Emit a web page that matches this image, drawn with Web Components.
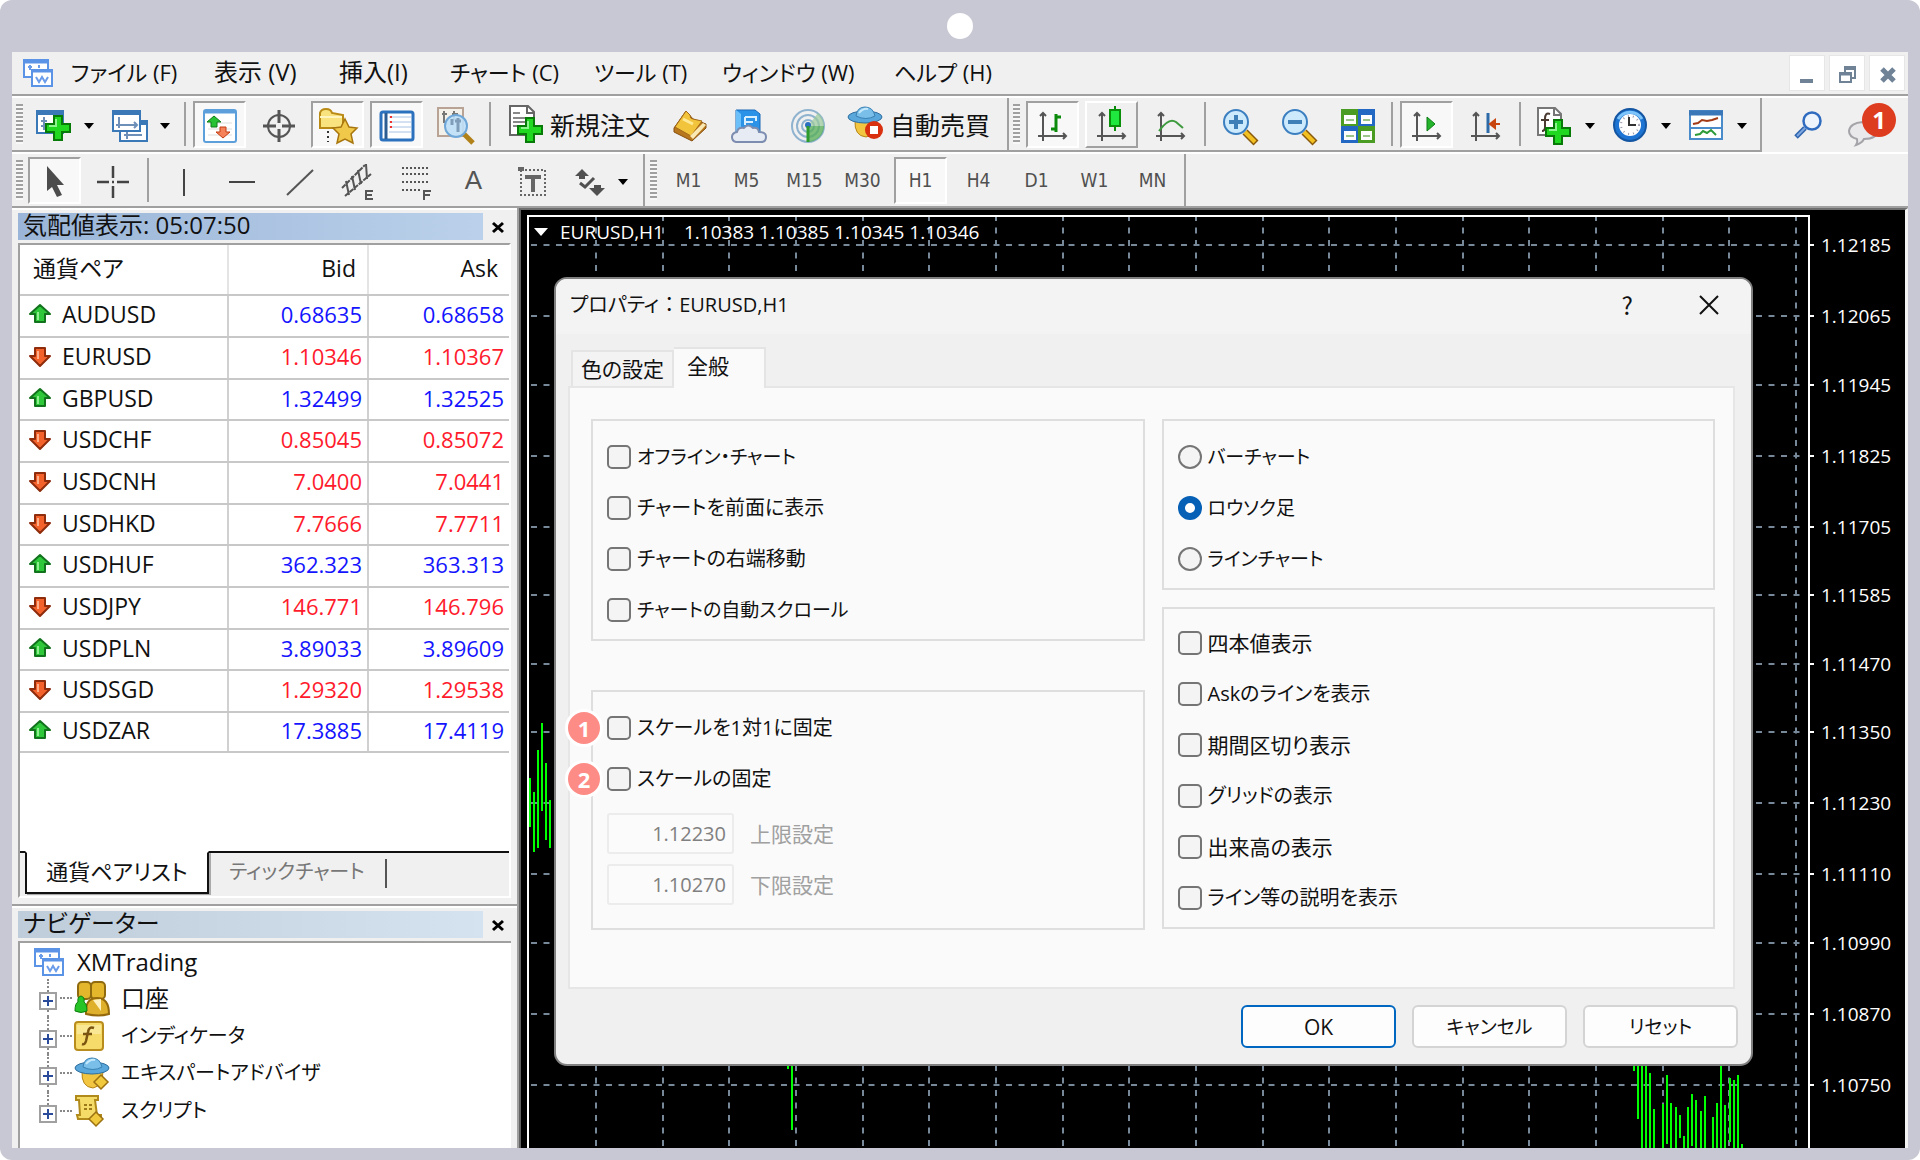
<!DOCTYPE html>
<html lang="ja">
<head>
<meta charset="utf-8">
<title>EURUSD,H1</title>
<style>
html,body{margin:0;background:#fff}
body{font-family:"Open Sans","Noto Sans CJK JP",sans-serif;font-size:24px;line-height:32px;font-feature-settings:"palt";color:#111}
</style>
</head>
<body>
<app-frame>
  <menu-bar slot="bars"></menu-bar>
  <tool-bars slot="bars"></tool-bars>
  <div slot="side" style="display:contents">
    <market-watch></market-watch>
    <nav-tree></nav-tree>
  </div>
  <price-chart slot="main">
    <props-dialog></props-dialog>
  </price-chart>
</app-frame>
<script>
const define=(name,html,setup)=>{
  const t=document.createElement('template');t.innerHTML=html;
  customElements.define(name,class extends HTMLElement{
    constructor(){super();this.attachShadow({mode:'open'})}
    connectedCallback(){
      if(this.ready)return;this.ready=true;
      this.shadowRoot.append(t.content.cloneNode(true));
      if(setup)setup(this,this.shadowRoot);
    }
  });
};

/* ---------- icons ---------- */
const plus=(x,y)=>`<path d="M${x-4} ${y-12}h8v8h8v8h-8v8h-8v-8h-8v-8h8z" fill="#1fd81f" stroke="#087a08" stroke-width="2"/><path d="M${x-2} ${y-9}v7h-7" fill="none" stroke="#8df58d" stroke-width="2"/>`;
const axes='<g stroke="#555" stroke-width="2" fill="none"><path d="M6 4v28M1 27h28"/><path d="M3 7l3-3 3 3M26 24l3 3-3 3"/></g>';
const winIcon=(x,y,w,h)=>`<rect x="${x+1}" y="${y+1}" width="${w-2}" height="${h-2}" fill="#fff" stroke="#3a78b8" stroke-width="2"/><rect x="${x}" y="${y}" width="${w}" height="5" rx="1" fill="#3a78b8"/>`;
const up='<path d="M12 3l10 9h-5v8H7v-8H2z" fill="#2fc83b" stroke="#11731c" stroke-width="2" stroke-linejoin="round"/><path d="M10 18v-8" stroke="#8ef08e" stroke-width="2"/>';
const down='<path d="M12 22L2 12h5V4h10v8h5z" fill="#f4622b" stroke="#8e2c0c" stroke-width="2" stroke-linejoin="round"/><path d="M10 7v8" stroke="#ffb08a" stroke-width="2"/>';
const hat=`<path d="M8 14q-1 16 11 17q10-2 10-17z" fill="#f3c642" stroke="#b58416" stroke-width="1"/><ellipse cx="18" cy="11" rx="17" ry="6" fill="#5aa7dc" stroke="#2d6e9f" stroke-width="1"/><path d="M9 10q1-9 9-9t10 9q-9 5-19 0z" fill="#79bfea" stroke="#3a80b2" stroke-width="1"/><path d="M12 7q4-5 9-4" stroke="#c5e8fb" stroke-width="2" fill="none"/>`;
const lens='<path d="M22 23l11 11" stroke="#8a5a0c" stroke-width="7"/><path d="M22 23l10 10" stroke="#f2c021" stroke-width="4"/><circle cx="13" cy="13" r="12" fill="#cdeafc" stroke="#3b7fc0" stroke-width="2"/>';
const I={
 logo:[32,32,'<g fill="#fff" stroke="#5b93e6" stroke-width="2"><path d="M2 3h24v17H2z"/><path d="M2 5h24" stroke-width="3"/><path d="M10 13h20v16H10z"/><path d="M10 14h20" stroke-width="3"/></g><path d="M6 10h4M8 8v5M17 8v3M14 20l3 5 3-5 3 5 3-5" stroke="#6a9cea" stroke-width="2" fill="none"/>'],
 newchart:[36,36,winIcon(0,2,28,24)+'<path d="M8 9v13M5 13h6M5 18h20" stroke="#6d8fb8" stroke-width="2"/>'+plus(22,20)],
 profiles:[36,36,winIcon(7,12,29,22)+'<path d="M12 27h18M15 24v7" stroke="#6d8fb8" stroke-width="2"/>'+winIcon(0,2,29,22)+'<path d="M4 17h20M7 9v11M22 14l3 3-3 3" stroke="#6d8fb8" stroke-width="2" fill="none"/>'],
 market:[34,34,'<rect x="1" y="1" width="32" height="32" rx="2" fill="#fff" stroke="#5d9fdb" stroke-width="2"/><path d="M1 3h32" stroke="#5d9fdb" stroke-width="3"/><path d="M5 14h24M5 20h24M5 26h24" stroke="#ddd" stroke-width="1"/><path d="M11 7l7 6h-4v5H8v-5H4z" fill="#27c233" stroke="#0f7a18"/><path d="M20 29l-7-6h4v-5h6v5h4z" fill="#f6825a" stroke="#c33c12"/>'],
 target:[32,32,'<g fill="none" stroke="#555"><circle cx="16" cy="16" r="11" stroke-width="2"/><path d="M16 0v13M16 19v13M0 16h13M19 16h13" stroke-width="3"/></g>'],
 folder:[38,36,'<path d="M1 5q1-4 6-4t6 4l11 2v13H1z" fill="#f9e37e" stroke="#b98a14" stroke-width="2"/><path d="M1 9h22" stroke="#fff5bf" stroke-width="2"/><path d="M9 23v11" stroke="#333" stroke-width="2" stroke-dasharray="2 3"/><path d="M26 11l4 8 8 1-6 6 2 9-8-4-8 4 2-9-6-6 8-1z" fill="#f0c94a" stroke="#a8760e" stroke-width="1.5"/>'],
 terminal:[34,30,'<rect x="1" y="1" width="32" height="28" rx="2" fill="#fff" stroke="#2b71bd" stroke-width="3"/><path d="M6 2v26" stroke="#2c5d92" stroke-width="3"/><path d="M9 6h22M9 11h22M9 16h22M9 21h22" stroke="#a9c2e6" stroke-width="1"/><path d="M11 5v13" stroke="#e33" stroke-width="2" stroke-dasharray="2 3"/>'],
 tester:[38,38,'<rect x="1" y="1" width="25" height="28" fill="#f4f0ea" stroke="#b8a394" stroke-width="2"/><path d="M7 4v12M17 4v10M5 7h5M15 7h6" stroke="#777" stroke-width="2"/><path d="M27 27l9 9" stroke="#b1811a" stroke-width="5"/><circle cx="19" cy="19" r="11" fill="#bfe0f8" fill-opacity=".9" stroke="#6fa8d8" stroke-width="2"/><path d="M15 12v6M21 11v14M18 14h6" stroke="#7f9db9" stroke-width="3" fill="none"/>'],
 order:[34,38,'<path d="M1 1h18l6 6v23H1z" fill="#fff" stroke="#666" stroke-width="2"/><path d="M18 1v7h7" fill="none" stroke="#666" stroke-width="2"/><path d="M4 8h7M4 13h16M4 17h16M4 21h10" stroke="#888" stroke-width="2"/>'+plus(21,25)],
 book:[34,32,'<path d="M13 1L1 18v4l18 9 14-13v-4L20 9z" fill="#b8771c" stroke="#86500e" stroke-width="1"/><path d="M13 1L2 17l16 9 11-15-9-2q-3 0-3-4z" fill="#f2c43c" stroke="#a3691a" stroke-width="1"/><path d="M17 26l13-13 3 2-13 14z" fill="#fbe9b4"/><path d="M10 9l10 5" stroke="#ffe994" stroke-width="3"/>'],
 cloud:[36,34,'<path d="M5 1h19l5 4v18H5z" fill="#2a93e8" stroke="#1d69b8"/><path d="M5 1l5 4v18H5z" fill="#6cc0fa"/><path d="M14 8h11v4M14 8v8M14 13h8" stroke="#d8efff" stroke-width="2" fill="none"/><path d="M5 33q-4-1-4-5t5-5q1-5 7-4 4-5 9 0 5-1 6 4 7 0 7 5t-5 5z" fill="#e7ebf4" stroke="#7d8db0" stroke-width="2"/>'],
 signal:[36,34,'<g fill="none" stroke="#8fb3cf" stroke-width="2"><circle cx="18" cy="17" r="16"/><circle cx="18" cy="17" r="11"/><circle cx="18" cy="17" r="6"/></g><path d="M18 17h16a16 16 0 0 1-16 16z" fill="#55ad55" fill-opacity=".75"/><path d="M18 17l10-13q6 5 6 13z" fill="#9acb9a" fill-opacity=".7"/><circle cx="18" cy="16" r="3" fill="#2b6fc0"/><path d="M18 17v16" stroke="#2c9a2c" stroke-width="3"/>'],
 auto:[36,36,hat+'<circle cx="27" cy="24" r="9" fill="#d9300f"/><rect x="23" y="20" width="8" height="8" fill="#fff"/>'],
 bars:[32,34,axes+'<path d="M19 5v18M19 8h5M14 20h5" stroke="#0b8a0b" stroke-width="3"/>'],
 candle:[32,34,axes+'<path d="M19 -3v25" stroke="#0a8a0a" stroke-width="2"/><rect x="14" y="1" width="10" height="16" fill="#1fe83f" stroke="#0a8f0a" stroke-width="2"/>'],
 line:[32,34,axes+'<path d="M4 22q10-14 17-9l7 6" stroke="#3d9a3d" stroke-width="2" fill="none"/>'],
 zoomin:[34,34,lens+'<path d="M13 6v14M6 13h14" stroke="#3f7fb8" stroke-width="4"/>'],
 zoomout:[34,34,lens+'<path d="M6 13h14" stroke="#3f7fb8" stroke-width="4"/>'],
 tiles:[34,34,'<path d="M0 0h17v17H0zM17 17h17v17H17z" fill="#4a9c22"/><path d="M17 0h17v17H17zM0 17h17v17H0z" fill="#2369c4"/><g fill="#fff"><path d="M3 6h12v9H3zM20 6h11v9H20zM3 22h12v9H3zM20 22h11v9H20z"/></g><path d="M5 11h8M5 27h8M22 11h7M22 27h7" stroke="#9cc58a" stroke-width="2"/>'],
 scroll:[32,34,axes+'<path d="M16 8v14l8-7z" fill="#25b52d" stroke="#0c7d14" stroke-width="1"/>'],
 shift:[32,34,axes+'<path d="M18 4v20" stroke="#2c6ba8" stroke-width="3"/><path d="M30 15h-6M25 11l-5 4 5 4z" stroke="#c94510" stroke-width="2" fill="#c94510"/>'],
 indic:[36,38,'<path d="M1 1h17l6 6v21H1z" fill="#fff" stroke="#777" stroke-width="2"/><path d="M17 1v7h7" fill="none" stroke="#777" stroke-width="2"/><path d="M13 7q-5-2-5 5v8q0 4-3 4M4 13h8" stroke="#4a3a32" stroke-width="2" fill="none"/>'+plus(21,25)],
 clock:[36,36,'<circle cx="17" cy="17" r="16" fill="#1d74d2" stroke="#1456a2" stroke-width="2"/><path d="M5 11a14 14 0 0 1 24 0" stroke="#7cc4fa" stroke-width="3" fill="none"/><circle cx="17" cy="17" r="11" fill="#fff"/><circle cx="17" cy="17" r="9" fill="none" stroke="#99a" stroke-width="2" stroke-dasharray="1 4"/><path d="M16 9v8h7" stroke="#333" stroke-width="2" fill="none"/>'],
 templ:[36,32,'<rect x="1" y="1" width="32" height="28" fill="#fff" stroke="#4a8bcb" stroke-width="2"/><path d="M0 3h34" stroke="#3a77b8" stroke-width="5"/><path d="M1 18h32" stroke="#4a8bcb" stroke-width="2"/><path d="M4 14l5-1 4-3 5 1 5-1 6-2" stroke="#a23a16" stroke-width="2" fill="none"/><path d="M6 25l5-1 3-3 4 2 4-3 5 5" stroke="#2e9b3a" stroke-width="2" fill="none"/>'],
 search:[30,28,'<path d="M11 17L2 26" stroke="#2e63ae" stroke-width="5"/><path d="M11 17L3 25" stroke="#7fa8e0" stroke-width="2"/><circle cx="18" cy="10" r="8.5" fill="#eef4fc" stroke="#2f6cc0" stroke-width="2.5"/>'],
 balloon:[32,28,'<path d="M8 26q2-3 1-6-8-2-8-8 1-8 14-9 14 1 14 9t-13 8q-2 4-8 6z" fill="#e9e9ec" stroke="#a3a3a8" stroke-width="2"/>'],
 cursor:[20,34,'<path d="M2 1v25l5-4 5 10 5-2-5-10h7z" fill="#4c4c4c"/>'],
 cross:[32,32,'<path d="M16 0v12M16 20v12M0 16h12M20 16h12M15 16h2" stroke="#444" stroke-width="2.5"/>'],
 vline:[10,30,'<path d="M5 2v27" stroke="#444" stroke-width="2"/>'],
 hline:[28,10,'<path d="M1 5h26" stroke="#444" stroke-width="2"/>'],
 trend:[30,30,'<path d="M2 28L28 3" stroke="#555" stroke-width="2"/>'],
 chan:[34,36,'<g stroke="#555" stroke-width="2"><path d="M1 24L24 1M4 32L30 10" stroke-dasharray="5 1"/><path d="M5 17l3 14M11 12l3 14M17 6l3 14M25 0l1 15"/><path d="M25 26v10M24 27h8M24 31h7M24 35h8"/></g>'],
 fibo:[32,36,'<g stroke="#555" stroke-width="2"><path d="M2 4h28M2 10h28M2 18h28M2 26h20" stroke-dasharray="2 2"/><path d="M24 26v10M23 27h8M24 31h6"/></g>'],
 label:[28,30,'<rect x="3" y="3" width="24" height="25" fill="none" stroke="#666" stroke-width="2" stroke-dasharray="2 2"/><path d="M0 0h6v4H0z" fill="#666"/><path d="M7 10h16M15 10v15" stroke="#666" stroke-width="4"/>'],
 arrows:[32,28,'<path d="M1 8l7-7 7 7h-4v3H5V8zM15 20l8 8 8-8h-4v-3h-7v3z" fill="#505050"/><path d="M6 15l5 4 9-9" stroke="#505050" stroke-width="3" fill="none"/>'],
 caret:[12,8,'<path d="M1 1h10L6 7z" fill="#000"/>'],
 x:[14,14,'<path d="M2 3l10 9M12 3L2 12" stroke="#000" stroke-width="3"/>'],
 up:[24,24,up],down:[24,24,down],
 people:[36,36,'<rect x="4" y="2" width="13" height="17" rx="4" fill="#e3b62b" stroke="#8f6a0f" stroke-width="2"/><rect x="17" y="2" width="14" height="17" rx="4" fill="#e3b62b" stroke="#8f6a0f" stroke-width="2"/><path d="M12 34q-1-16 11-16t12 16q-10 3-23 0z" fill="#dfb02c" stroke="#94690c" stroke-width="2"/><path d="M19 20l8 11 0-12" fill="#fff1c2"/><path d="M1 31q0-8 3-9-1-5 3-6 4 1 3 6 3 2 3 9-6 3-12 0z" fill="#26c426" stroke="#0d7e0d"/>'],
 func:[30,30,'<rect x="1" y="1" width="28" height="28" rx="3" fill="#f6db6a" stroke="#b98d1d" stroke-width="2"/><path d="M3 4h24v9H3z" fill="#fbeeb0" opacity=".6"/><path d="M20 7q-5-2-6 4l-2 9q-1 4-4 3M9 13h9" stroke="#7a5410" stroke-width="2.5" fill="none"/>'],
 expert:[36,32,hat+'<path d="M27 18l7 7-7 7-7-7z" fill="#f0c93c" stroke="#9c7112" stroke-width="1.5"/>'],
 script:[32,32,'<path d="M2 1h22v4h-3l2 15h4v4H4l-1-4h3L5 5H2z" fill="#f5dc69" stroke="#b18a1c" stroke-width="2"/><path d="M10 10h3M15 10h3M10 14h3M15 14h3" stroke="#9d7a18" stroke-width="2"/><path d="M22 17l7 7-7 7-7-7z" fill="#f0c93c" stroke="#9c7112" stroke-width="1.5"/>'],
 min:[36,36,'<path d="M10 25h13" stroke="#6f8296" stroke-width="4"/>'],
 restore:[36,36,'<path d="M15 16v-4h10v10h-3" fill="none" stroke="#6f8296" stroke-width="2"/><path d="M14 12h12" stroke="#6f8296" stroke-width="4"/><path d="M10 17h11v9H10z" fill="#fff" stroke="#6f8296" stroke-width="2"/><path d="M9 18h13" stroke="#6f8296" stroke-width="3"/>'],
 close:[36,36,'<path d="M12 13l12 12M24 13L12 25" stroke="#6f8296" stroke-width="5"/>'],
 dlgclose:[20,20,'<path d="M1 1l18 18M19 1L1 19" stroke="#111" stroke-width="2"/>']
};
const icon=n=>{const[w,h,b]=I[n];return `<svg width="${w}" height="${h}" viewBox="0 0 ${w} ${h}" overflow="visible" aria-hidden="true">${b}</svg>`};
define('ui-icon','<style>:host{display:inline-flex;flex:none}svg{display:block}</style>',(el,r)=>{
  r.append(document.createRange().createContextualFragment(icon(el.getAttribute('name'))));
});

/* ---------- shell ---------- */
define('app-frame',`<style>
:host{display:flex;flex-direction:column;min-height:100vh;box-sizing:border-box;padding:0 12px 12px;background:#c8c8d4;border-radius:12px}
.top{height:52px;display:flex;align-items:center;justify-content:center}
.top i{width:26px;height:26px;border-radius:50%;background:#fff}
.bars{display:block;background:#f0f0f0}
.body{flex:1;display:flex;background:#f0f0f0;border-top:2px solid #a0a0a0;min-height:0}
.side{width:505px;flex:none;display:flex;flex-direction:column;border-right:2px solid #a0a0a0}
.main{flex:1;display:flex;min-width:0}
</style><div class="top"><i></i></div><div class="bars"><slot name="bars"></slot></div>
<div class="body"><div class="side"><slot name="side"></slot></div><div class="main"><slot name="main"></slot></div></div>`);

define('menu-bar',`<style>
:host{display:flex;align-items:center;height:42px;padding:0 3px 0 8px;border-bottom:2px solid #a0a0a0}
.logo{width:51px;padding-left:2px;box-sizing:border-box}
nav{flex:1;display:grid;grid-template-columns:143px 125px 111px 144px 128px 172px auto;justify-content:start;align-items:center;padding-bottom:3px}
a{color:#111;text-decoration:none;white-space:nowrap}
.k{font-size:22px}
.win{display:flex;gap:4px}
button{width:36px;height:36px;padding:0;border:1px solid #e6e6e6;background:#fff}
</style><ui-icon class="logo" name="logo"></ui-icon>
<nav><a class="k" href="#">ファイル (F)</a><a href="#">表示 (V)</a><a href="#">挿入(I)</a><a class="k" href="#">チャート (C)</a><a class="k" href="#">ツール (T)</a><a class="k" href="#">ウィンドウ (W)</a><a class="k" href="#">ヘルプ (H)</a></nav>
<div class="win"><button aria-label="最小化"><ui-icon name="min"></ui-icon></button><button aria-label="元に戻す"><ui-icon name="restore"></ui-icon></button><button aria-label="閉じる"><ui-icon name="close"></ui-icon></button></div>`);

define('tool-button',`<style>
:host{display:flex;flex:none}
button{display:flex;align-items:center;justify-content:center;gap:11px;width:53px;height:47px;box-sizing:border-box;padding:0;border:2px solid transparent;background:none;color:#505050;font:19px/24px "DejaVu Sans Condensed","DejaVu Sans",sans-serif}
:host([drop]) button{width:76px}
:host([icon]) button{padding-top:3px}
:host([pressed]) button{background:#f8f8f8;border-color:#a0a0a0 #fff #fff #a0a0a0}
:host([raised]) button{border-color:#fff #a0a0a0 #a0a0a0 #fff}
:host([wide]) button{width:auto;gap:7px;padding:0 5px;font:25px/32px "Noto Sans CJK JP",sans-serif;color:#111;white-space:nowrap}
</style><button><slot></slot></button>`,(el,r)=>{
  const b=r.querySelector('button'),n=el.getAttribute('icon');
  if(n){b.insertAdjacentHTML('afterbegin',`<ui-icon name="${n}"></ui-icon>`);b.title=n}
  if(el.hasAttribute('drop'))b.insertAdjacentHTML('beforeend','<ui-icon name="caret"></ui-icon>');
});

define('tool-bars',`<style>
:host{display:block;border-top:2px solid #fff}
.row{display:flex;align-items:center;height:52px}
.row.a{height:54px}
.set{display:flex;align-items:center;gap:5px;height:52px;box-sizing:border-box;border-right:2px solid #a0a0a0;padding:0 4px}
.first{border-bottom:2px solid #a0a0a0;gap:6px;height:54px}
.one{padding-right:10px}
.tf{padding:0 5px}
.row.b{border-top:2px solid #fff}
.fill{flex:1}
.grip{width:7px;height:40px;background:repeating-linear-gradient(#a0a0a0 0 2px,#f8f8f8 2px 4px)}
.sep{width:2px;height:44px;background:#a0a0a0;margin:0 1px}
.one .sep+tool-button[wide]{margin-left:4px}
.b .sep{margin:0 3px}
.drops{display:flex}
.one .drops{margin:0 -2px}
.end{display:flex;align-items:center;gap:24px;padding-right:12px}
.note{position:relative;width:48px;height:44px;display:flex;align-items:flex-end}
.note b{position:absolute;right:0;top:0;width:34px;height:34px;border-radius:50%;background:#de3c1e;color:#fff;font:bold 24px/34px "Open Sans",sans-serif;text-align:center}
.big{font:26px/26px "Liberation Sans",sans-serif;color:#555}
</style>
<div class="row a"><div class="set first one">
<span class="grip"></span><span class="drops"><tool-button icon="newchart" drop></tool-button><tool-button icon="profiles" drop></tool-button></span><span class="sep"></span>
<tool-button icon="market" pressed></tool-button><tool-button icon="target"></tool-button><tool-button icon="folder" pressed></tool-button><tool-button icon="terminal" pressed></tool-button><tool-button icon="tester"></tool-button><span class="sep"></span>
<tool-button icon="order" wide>新規注文</tool-button><tool-button icon="book"></tool-button><tool-button icon="cloud"></tool-button><tool-button icon="signal"></tool-button><tool-button icon="auto" wide>自動売買</tool-button></div>
<div class="set first"><span class="grip"></span>
<tool-button icon="bars" pressed></tool-button><tool-button icon="candle" raised></tool-button><tool-button icon="line"></tool-button><span class="sep"></span>
<tool-button icon="zoomin"></tool-button><tool-button icon="zoomout"></tool-button><tool-button icon="tiles"></tool-button><span class="sep"></span>
<tool-button icon="scroll" pressed></tool-button><tool-button icon="shift"></tool-button><span class="sep"></span>
<span class="drops"><tool-button icon="indic" drop></tool-button><tool-button icon="clock" drop></tool-button><tool-button icon="templ" drop></tool-button></span></div>
<span class="fill"></span><div class="end"><ui-icon name="search"></ui-icon><div class="note"><ui-icon name="balloon"></ui-icon><b>1</b></div></div></div>
<div class="row b"><div class="set">
<span class="grip"></span><tool-button icon="cursor" pressed></tool-button><tool-button icon="cross"></tool-button><span class="sep"></span>
<tool-button icon="vline"></tool-button><tool-button icon="hline"></tool-button><tool-button icon="trend"></tool-button><tool-button icon="chan"></tool-button><tool-button icon="fibo"></tool-button><tool-button><span class="big">A</span></tool-button><tool-button icon="label"></tool-button><tool-button icon="arrows" drop></tool-button></div>
<div class="set tf"><span class="grip"></span><tool-button>M1</tool-button><tool-button>M5</tool-button><tool-button>M15</tool-button><tool-button>M30</tool-button><tool-button pressed>H1</tool-button><tool-button>H4</tool-button><tool-button>D1</tool-button><tool-button>W1</tool-button><tool-button>MN</tool-button></div></div>`);

/* ---------- left panels ---------- */
define('panel-title',`<style>
:host{display:flex;align-items:center;height:27px;margin:3px -2px 3px 6px}
h2{flex:1;margin:0;padding-left:5px;font:inherit;line-height:23px;height:27px;overflow:hidden;background:linear-gradient(90deg,var(--from),var(--to))}
button{width:30px;height:27px;border:0;padding:0;background:none;display:flex;align-items:center;justify-content:center}
</style><h2><slot></slot></h2><button aria-label="閉じる"><ui-icon name="x"></ui-icon></button>`);

const quotes=[['AUDUSD','0.68635','0.68658',1],['EURUSD','1.10346','1.10367',0],['GBPUSD','1.32499','1.32525',1],['USDCHF','0.85045','0.85072',0],['USDCNH','7.0400','7.0441',0],['USDHKD','7.7666','7.7711',0],['USDHUF','362.323','363.313',1],['USDJPY','146.771','146.796',0],['USDPLN','3.89033','3.89609',1],['USDSGD','1.29320','1.29538',0],['USDZAR','17.3885','17.4119',1]];
define('market-watch',`<style>
:host{display:flex;flex-direction:column;border-bottom:2px solid #a0a0a0;height:694px;border-top:2px solid #fff;padding-right:6px;--from:#9ab5d7;--to:#bbd1eb}
.box{flex:1;display:flex;flex-direction:column;margin:0 0 6px 6px;border:2px solid #a0a0a0;border-right-color:#fff;border-bottom-color:#fff;background:#fff}
table{border-collapse:collapse;table-layout:fixed;width:100%}
th,td{box-sizing:border-box;padding:0 5px 4px 0;height:42px;text-align:right;border-bottom:2px solid #c8c8c8;font-size:22px;line-height:28px;font-weight:400;font-feature-settings:normal}
tr:nth-child(3n) td{height:41px}
tr:last-child td{height:40px}
td+td,th+th{border-left:2px solid #d0d0d0}
th{height:50px;font-size:23px;padding:0 11px 3px 0;font-feature-settings:"palt"}
th+th{border-color:#e4e4e4}
th,th+th{border-bottom-color:#c8c8c8}
th:first-child{text-align:left;padding:0 0 3px 13px}
.s{width:208px}.b{width:140px}
td:first-child{text-align:left;font-size:23px;padding-left:8px}
td div{display:flex;align-items:center;gap:10px}
.u{color:#1414ff}.d{color:#ff1a2c}
.tabs{display:flex;margin-top:auto;height:45px;background:#f0f0f0}
.tabs button{border:0;background:none;padding:0 0 4px;font:inherit;font-feature-settings:inherit;font-size:22px;height:43px;color:#777;border-top:2px solid #111;white-space:nowrap}
.tabs .on{width:184px;box-sizing:border-box;background:#fff;color:#111;border:2px solid #111;border-top-color:#fff;box-shadow:2px 1px 0 #aaa}
.tabs i{width:5px;height:2px;background:#111}
.tabs .off{padding:0 20px 4px;box-sizing:border-box;font-size:20px}
.rest{flex:1;border-top:2px solid #111}
.rest::before{content:"";display:block;width:2px;height:29px;margin-top:6px;background:#555}
</style><panel-title>気配値表示: 05:07:50</panel-title><div class="box"><table><thead><tr><th class="s">通貨ペア</th><th class="b">Bid</th><th>Ask</th></tr></thead><tbody></tbody></table>
<div class="tabs"><i></i><button class="on">通貨ペアリスト</button><button class="off">ティックチャート</button><span class="rest"></span></div></div>`,(el,r)=>{
  r.querySelector('tbody').innerHTML=quotes.map(([s,b,a,u])=>`<tr><td><div><ui-icon name="${u?'up':'down'}"></ui-icon>${s}</div></td><td class="${u?'u':'d'}">${b}</td><td class="${u?'u':'d'}">${a}</td></tr>`).join('');
});

define('nav-tree',`<style>
:host{display:flex;flex-direction:column;flex:1;border-top:2px solid #fff;padding-right:6px;--from:#bfccda;--to:#d5e2f0}
.box{flex:1;margin-left:6px;border:2px solid #a0a0a0;border-width:2px 0 0 2px;background:#fff;padding:1px 0 0 13px}
.root{display:flex;align-items:center;gap:12px;height:35px}
ul{list-style:none;margin:0;padding:0 0 0 6px}
li{display:flex;align-items:center;height:38px}
li:nth-child(2n){height:37px}
.k{font-size:20px}
.tg{width:18px;height:18px;box-sizing:border-box;padding:0;border:2px solid #a0a0a0;background:#fff;display:flex;align-items:center;justify-content:center}
.tg::before{content:"";width:10px;height:10px;background:linear-gradient(#2a4a9a,#2a4a9a) center/10px 2px no-repeat,linear-gradient(#2a4a9a,#2a4a9a) center/2px 10px no-repeat}
.dot{width:12px;border-top:2px dotted #888;margin:0 2px 0 3px}
.ic{width:47px;display:flex}
.v{display:flex;flex-direction:column;align-items:center;height:100%}
.v::before{content:"";height:13px;border-left:2px dotted #888}
.v::after{content:"";flex:1;border-left:2px dotted #888}
li:last-child .v::after{visibility:hidden}
</style><panel-title>ナビゲーター</panel-title><div class="box"><div class="root"><ui-icon name="logo"></ui-icon>XMTrading</div><ul></ul></div>`,(el,r)=>{
  r.querySelector('ul').innerHTML=[['people','口座',''],['func','インディケータ','k'],['expert','エキスパートアドバイザ','k'],['script','スクリプト','k']].map(([i,t,c])=>`<li><span class="v"><button class="tg" aria-label="${t}"></button></span><span class="dot"></span><span class="ic"><ui-icon name="${i}"></ui-icon></span><span class="${c}">${t}</span></li>`).join('');
});

/* ---------- chart ---------- */
define('price-chart',`<style>
:host{display:flex;flex:1;position:relative;background:#000;border:2px solid #6e6e6e;border-right:3px solid #f4f4f4;border-bottom:0;border-left-color:#606060;padding:5px 0 0 6px;min-width:0}
.plot{flex:1;border:2px solid #fff;border-bottom:0;position:relative;min-width:0}
.axis{width:95px;position:relative}
svg{position:absolute;inset:0;width:100%;height:100%}
.axis svg{overflow:visible}
text{font:19px "Open Sans",sans-serif;fill:#fff}
.head{position:relative;display:flex;align-items:center;gap:20px;height:24px;margin:3px 0 0 5px;color:#fff;font-size:19px;line-height:24px;white-space:nowrap;font-feature-settings:normal}
.head::before{content:"";border:7px solid transparent;border-top:8px solid #fff;border-bottom:0;margin-right:-8px}
</style><div class="plot"><svg class="g"></svg><div class="head"><span>EURUSD,H1</span><span>1.10383 1.10385 1.10345 1.10346</span></div></div><div class="axis"><svg class="a"></svg></div><slot></slot>`,(el,r)=>{
  const rows=[[28,'1.12185'],[99,'1.12065'],[168,'1.11945'],[239,'1.11825'],[310,'1.11705'],[378,'1.11585'],[447,'1.11470'],[515,'1.11350'],[586,'1.11230'],[657,'1.11110'],[726,'1.10990'],[797,'1.10870'],[868,'1.10750']];
  let g='<g stroke="#778899" stroke-width="2">';
  for(let k=0;k<19;k++){const x=Math.round(67+k*66.67);g+=`<line x1="${x}" y1="-2" x2="${x}" y2="100%" stroke-dasharray="6 6.5"/>`}
  rows.forEach(([y])=>g+=`<line x1="2" y1="${y}" x2="1272" y2="${y}" stroke-dasharray="6 6.5"/>`);
  g+='</g><g stroke="#00ff00" stroke-width="2">';
  [[530,778,827],[534,792,852],[538,750,848],[542,723,811],[546,763,840],[550,800,848],[788,1060,1069],[792,1060,1130],[1634,1060,1071],[1638,1060,1119],[1642,1060,1150],[1646,1060,1150],[1650,1073,1150],[1654,1109,1150],[1663,1104,1150],[1667,1075,1144],[1671,1103,1150],[1676,1107,1150],[1680,1115,1138],[1684,1136,1150],[1688,1107,1150],[1692,1094,1146],[1696,1100,1150],[1701,1111,1150],[1705,1096,1150],[1713,1117,1150],[1717,1103,1150],[1721,1060,1150],[1725,1105,1150],[1730,1078,1142],[1734,1080,1150],[1738,1075,1150],[1742,1144,1150]].forEach(([x,a,b])=>g+=`<line x1="${x-529}" y1="${a-217}" x2="${x-529}" y2="${b-217}"/>`);
  r.querySelector('.g').innerHTML=g+'</g>';
  r.querySelector('.a').innerHTML=rows.map(([y,t])=>`<line x1="0" x2="4" y1="${y+2}" y2="${y+2}" stroke="#fff" stroke-width="2"/><text x="11" y="${y+9}">${t}</text>`).join('');
});

/* ---------- dialog ---------- */
define('check-option',`<style>
:host{display:flex;height:24px}
label{display:flex;align-items:center;gap:6px;white-space:nowrap;font-size:20px;line-height:24px}
:host([kana]) label{font-size:19px}
:host([kanji]) label{font-size:21px}
input{appearance:none;margin:0;width:24px;height:24px;box-sizing:border-box;border:2px solid #757575;border-radius:5px;background:#f4f4f4}
input[type=radio]{border-radius:50%}
input[type=radio]:checked{border:7px solid #0560b6;background:#fff}
.badge{position:absolute;margin-left:-42px;width:32px;height:32px;border:3px solid #fff;border-radius:50%;background:#fe8c86;color:#fff;font:bold 22px/32px "Open Sans",sans-serif;text-align:center}
</style><label><input type="checkbox"><slot></slot></label>`,(el,r)=>{
  const i=r.querySelector('input');
  if(el.hasAttribute('radio')){i.type='radio';i.name='kind'}
  i.checked=el.hasAttribute('checked');
  if(el.hasAttribute('badge'))r.querySelector('label').insertAdjacentHTML('afterbegin',`<span class="badge">${el.getAttribute('badge')}</span>`);
});
define('option-group',`<style>:host{display:block}fieldset{margin:0;border:2px solid #dedede;padding:24px 14px 17px;display:flex;flex-direction:column;gap:27px;min-width:0}:host([tall]) fieldset{padding-top:22px}</style><fieldset><slot></slot></fieldset>`);
define('limit-field',`<style>
:host{display:block}
label{display:flex;align-items:center;gap:16px;color:#a0a0a0;font-size:21px;line-height:24px}
input{width:127px;height:41px;box-sizing:border-box;border:2px solid #ececec;border-radius:3px;background:#fbfbfb;color:#808080;font:20px/24px "Open Sans",sans-serif;text-align:right;padding:0 6px}
</style><label><input disabled><slot></slot></label>`,(el,r)=>{r.querySelector('input').value=el.getAttribute('value')});
define('props-dialog',`<style>
:host{position:absolute;left:33px;top:67px;width:1199px;box-sizing:border-box;border:2px solid #808080;border-radius:13px;background:#f0f0f0;overflow:hidden;font-size:21px;line-height:28px;padding-bottom:16px}
header{display:flex;align-items:center;height:55px;box-sizing:border-box;background:#f3f3f3;padding:0 32px 3px 14px}
h1{flex:1;margin:0;font:inherit;font-size:20px}
h1 span{font-feature-settings:normal}
header button{border:0;background:none;padding:0;font:24px/28px "Noto Sans CJK JP",sans-serif;color:#111;margin-left:66px;display:flex}
.tabs{display:flex;align-items:flex-end;padding:13px 0 0 15px}
.tabs button{font:inherit;font-feature-settings:inherit;box-sizing:border-box;height:36px;width:103px;padding:0;border:2px solid #e4e4e4;border-bottom:0;background:#f3f3f3;color:#111}
.tabs .on{height:41px;width:92px;background:#fafafa;margin-bottom:-2px;padding:0 0 5px 13px;text-align:left;border-left:0;position:relative}
.page{display:grid;grid-template-columns:1fr 1fr;gap:17px;margin:0 16px 0 12px;border:2px solid #e6e6e6;background:#fafafa;padding:31px 18px 57px 21px}
.col{display:flex;flex-direction:column}
.l{gap:49px}.r{gap:17px}
.fields{display:flex;flex-direction:column;gap:10px;margin-top:-5px;padding-bottom:6px}
footer{display:flex;justify-content:flex-end;gap:16px;padding:16px 13px 0 0}
footer button{width:155px;height:43px;box-sizing:border-box;border:2px solid #d4d4d4;border-radius:6px;background:#fdfdfd;font:inherit;font-feature-settings:inherit;color:#111;padding:0}
footer .k{font-size:19px}
footer .ok{border-color:#0067c0}
</style>
<header><h1>プロパティ<span>：</span>EURUSD,H1</h1><button aria-label="ヘルプ">?</button><button aria-label="閉じる"><ui-icon name="dlgclose"></ui-icon></button></header>
<div class="tabs"><button>色の設定</button><button class="on">全般</button></div>
<div class="page"><div class="col l">
<option-group><check-option kana>オフライン・チャート</check-option><check-option>チャートを前面に表示</check-option><check-option>チャートの右端移動</check-option><check-option kana>チャートの自動スクロール</check-option></option-group>
<option-group><check-option badge="1">スケールを1対1に固定</check-option><check-option badge="2">スケールの固定</check-option><div class="fields"><limit-field value="1.12230">上限設定</limit-field><limit-field value="1.10270">下限設定</limit-field></div></option-group>
</div><div class="col r">
<option-group><check-option radio kana>バーチャート</check-option><check-option radio kana checked>ロウソク足</check-option><check-option radio kana>ラインチャート</check-option></option-group>
<option-group tall><check-option kanji>四本値表示</check-option><check-option>Askのラインを表示</check-option><check-option kanji>期間区切り表示</check-option><check-option>グリッドの表示</check-option><check-option kanji>出来高の表示</check-option><check-option>ライン等の説明を表示</check-option></option-group>
</div></div>
<footer><button class="ok">OK</button><button class="k">キャンセル</button><button class="k">リセット</button></footer>`);
</script>
</body>
</html>
